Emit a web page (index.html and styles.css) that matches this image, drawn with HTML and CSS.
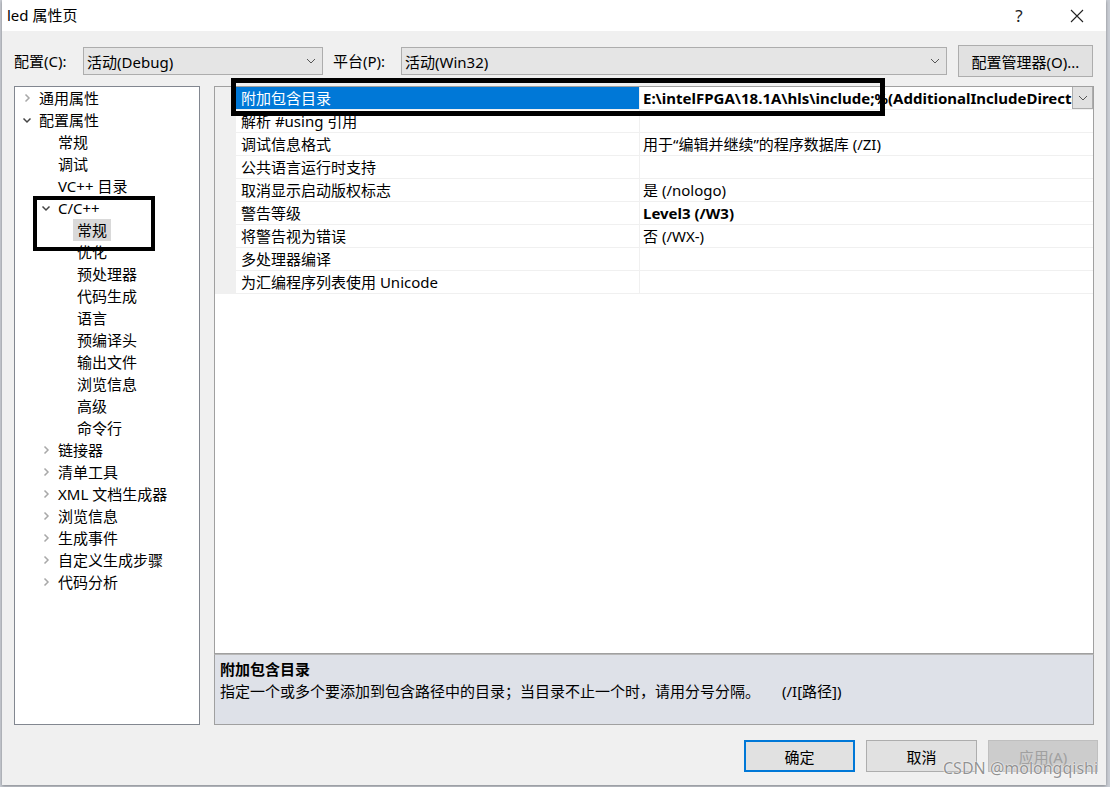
FILE: index.html
```html
<!DOCTYPE html>
<html lang="zh-CN">
<head>
<meta charset="utf-8">
<title>led 属性页</title>
<link rel="stylesheet" href="styles.css">
</head>
<body>
<div class="dialog">
  <div class="titlebar">
    <span class="title">led 属性页</span>
    <div class="title-btns">
      <span class="help">?</span>
      <span class="close"><svg width="14" height="14" viewBox="0 0 14 14"><path d="M1 1 L13 13 M13 1 L1 13" stroke="#222" stroke-width="1.1" fill="none"/></svg></span>
    </div>
  </div>

  <div class="toolbar">
    <span class="lbl lbl-config">配置(C):</span>
    <div class="combo combo-config"><span>活动(Debug)</span><svg class="chev" width="10" height="6" viewBox="0 0 10 6"><path d="M1 1 L5 5 L9 1" stroke="#555" stroke-width="1" fill="none"/></svg></div>
    <span class="lbl lbl-platform">平台(P):</span>
    <div class="combo combo-platform"><span>活动(Win32)</span><svg class="chev" width="10" height="6" viewBox="0 0 10 6"><path d="M1 1 L5 5 L9 1" stroke="#555" stroke-width="1" fill="none"/></svg></div>
    <div class="btn btn-mgr">配置管理器(O)...</div>
  </div>

  <div class="main">
    <div class="tree">
      <div class="node l0"><span class="tw"><svg width="16" height="22" viewBox="0 0 16 22"><path d="M6.5 7.5 L10 11 L6.5 14.5" stroke="#a8a8a8" stroke-width="1.5" fill="none"/></svg></span><span class="nl">通用属性</span></div>
      <div class="node l0"><span class="tw"><svg width="16" height="22" viewBox="0 0 16 22"><path d="M4.5 9.5 L8 13 L11.5 9.5" stroke="#444" stroke-width="1.5" fill="none"/></svg></span><span class="nl">配置属性</span></div>
      <div class="node l1"><span class="tw"></span><span class="nl">常规</span></div>
      <div class="node l1"><span class="tw"></span><span class="nl">调试</span></div>
      <div class="node l1"><span class="tw"></span><span class="nl">VC++ 目录</span></div>
      <div class="node l1"><span class="tw"><svg width="16" height="22" viewBox="0 0 16 22"><path d="M4.5 9.5 L8 13 L11.5 9.5" stroke="#444" stroke-width="1.5" fill="none"/></svg></span><span class="nl">C/C++</span></div>
      <div class="node l2"><span class="tw"></span><span class="nl sel">常规</span></div>
      <div class="node l2"><span class="tw"></span><span class="nl">优化</span></div>
      <div class="node l2"><span class="tw"></span><span class="nl">预处理器</span></div>
      <div class="node l2"><span class="tw"></span><span class="nl">代码生成</span></div>
      <div class="node l2"><span class="tw"></span><span class="nl">语言</span></div>
      <div class="node l2"><span class="tw"></span><span class="nl">预编译头</span></div>
      <div class="node l2"><span class="tw"></span><span class="nl">输出文件</span></div>
      <div class="node l2"><span class="tw"></span><span class="nl">浏览信息</span></div>
      <div class="node l2"><span class="tw"></span><span class="nl">高级</span></div>
      <div class="node l2"><span class="tw"></span><span class="nl">命令行</span></div>
      <div class="node l1"><span class="tw"><svg width="16" height="22" viewBox="0 0 16 22"><path d="M6.5 7.5 L10 11 L6.5 14.5" stroke="#a8a8a8" stroke-width="1.5" fill="none"/></svg></span><span class="nl">链接器</span></div>
      <div class="node l1"><span class="tw"><svg width="16" height="22" viewBox="0 0 16 22"><path d="M6.5 7.5 L10 11 L6.5 14.5" stroke="#a8a8a8" stroke-width="1.5" fill="none"/></svg></span><span class="nl">清单工具</span></div>
      <div class="node l1"><span class="tw"><svg width="16" height="22" viewBox="0 0 16 22"><path d="M6.5 7.5 L10 11 L6.5 14.5" stroke="#a8a8a8" stroke-width="1.5" fill="none"/></svg></span><span class="nl">XML 文档生成器</span></div>
      <div class="node l1"><span class="tw"><svg width="16" height="22" viewBox="0 0 16 22"><path d="M6.5 7.5 L10 11 L6.5 14.5" stroke="#a8a8a8" stroke-width="1.5" fill="none"/></svg></span><span class="nl">浏览信息</span></div>
      <div class="node l1"><span class="tw"><svg width="16" height="22" viewBox="0 0 16 22"><path d="M6.5 7.5 L10 11 L6.5 14.5" stroke="#a8a8a8" stroke-width="1.5" fill="none"/></svg></span><span class="nl">生成事件</span></div>
      <div class="node l1"><span class="tw"><svg width="16" height="22" viewBox="0 0 16 22"><path d="M6.5 7.5 L10 11 L6.5 14.5" stroke="#a8a8a8" stroke-width="1.5" fill="none"/></svg></span><span class="nl">自定义生成步骤</span></div>
      <div class="node l1"><span class="tw"><svg width="16" height="22" viewBox="0 0 16 22"><path d="M6.5 7.5 L10 11 L6.5 14.5" stroke="#a8a8a8" stroke-width="1.5" fill="none"/></svg></span><span class="nl">代码分析</span></div>
    </div>

    <div class="right">
      <div class="grid">
        <div class="row selected">
          <div class="margin"></div>
          <div class="name">附加包含目录</div>
          <div class="value"><span class="vtext bold">E:\intelFPGA\18.1A\hls\include;%(AdditionalIncludeDirectories)</span><span class="dd"><svg width="10" height="6" viewBox="0 0 10 6"><path d="M1 1 L5 5 L9 1" stroke="#555" stroke-width="1" fill="none"/></svg></span></div>
        </div>
        <div class="row"><div class="margin"></div><div class="name">解析 #using 引用</div><div class="value"></div></div>
        <div class="row"><div class="margin"></div><div class="name">调试信息格式</div><div class="value">用于“编辑并继续”的程序数据库 (/ZI)</div></div>
        <div class="row"><div class="margin"></div><div class="name">公共语言运行时支持</div><div class="value"></div></div>
        <div class="row"><div class="margin"></div><div class="name">取消显示启动版权标志</div><div class="value">是 (/nologo)</div></div>
        <div class="row"><div class="margin"></div><div class="name">警告等级</div><div class="value bold">Level3 (/W3)</div></div>
        <div class="row"><div class="margin"></div><div class="name">将警告视为错误</div><div class="value">否 (/WX-)</div></div>
        <div class="row"><div class="margin"></div><div class="name">多处理器编译</div><div class="value"></div></div>
        <div class="row"><div class="margin"></div><div class="name">为汇编程序列表使用 Unicode</div><div class="value"></div></div>
      </div>
      <div class="desc">
        <div class="desc-title">附加包含目录</div>
        <div class="desc-text">指定一个或多个要添加到包含路径中的目录；当目录不止一个时，请用分号分隔。<span class="switch">(/I[路径])</span></div>
      </div>
    </div>
  </div>

  <div class="footer">
    <div class="btn fbtn default">确定</div>
    <div class="btn fbtn">取消</div>
    <div class="btn fbtn disabled">应用(A)</div>
  </div>

  <div class="annot annot-row"></div>
  <div class="annot annot-tree"></div>
  <div class="watermark">CSDN @molongqishi</div>
</div>
</body>
</html>
```

FILE: styles.css
```css
html, body {
  margin: 0;
  padding: 0;
}
body {
  width: 1110px;
  height: 787px;
  overflow: hidden;
  background: #c9cdd4;
  font-family: "Noto Sans", "Noto Sans CJK SC", sans-serif;
  font-size: 15px;
  color: #000;
}
.dialog {
  position: relative;
  margin-left: 2px;
  width: 1104px;
  height: 785px;
  background: #f0f0f0;
  box-shadow: 0 1px 3px rgba(0,0,0,0.35);
  display: flex;
  flex-direction: column;
}
.titlebar {
  height: 31px;
  background: #fff;
  display: flex;
  align-items: center;
  justify-content: space-between;
  padding-left: 5px;
  flex: none;
}
.title { line-height: 31px; }
.title-btns {
  display: flex;
  align-items: center;
  height: 31px;
}
.help {
  width: 20px;
  text-align: center;
  margin-right: 41px;
  font-size: 17px;
  color: #222;
  line-height: 31px;
}
.close {
  display: flex;
  margin-right: 22px;
}

.toolbar {
  display: flex;
  align-items: center;
  height: 32px;
  margin-top: 14px;
  padding: 0 12px;
  flex: none;
}
.lbl { line-height: 28px; white-space: nowrap; flex: none; }
.lbl-config { width: 69px; }
.lbl-platform { width: 68px; margin-left: 10px; }
.combo {
  box-sizing: border-box;
  height: 28px;
  background: #e5e5e5;
  border: 1px solid #adadad;
  display: flex;
  align-items: center;
  justify-content: space-between;
  padding: 0 6px 0 3px;
  flex: none;
}
.combo-config { width: 240px; }
.combo-platform { width: 546px; }
.btn {
  box-sizing: border-box;
  background: #e1e1e1;
  border: 1px solid #adadad;
  display: flex;
  align-items: center;
  justify-content: center;
  flex: none;
}
.btn-mgr {
  width: 135px;
  height: 32px;
  margin-left: 11px;
}

.main {
  display: flex;
  margin-top: 9px;
  height: 639px;
  padding: 0 12px;
  flex: none;
}
.tree {
  box-sizing: border-box;
  flex: none;
  width: 186px;
  height: 639px;
  background: #fff;
  border: 1px solid #828790;
}
.node {
  display: flex;
  align-items: center;
  height: 22px;
  line-height: 22px;
  white-space: nowrap;
}
.node.l0 { padding-left: 4px; }
.node.l1 { padding-left: 23px; }
.node.l2 { padding-left: 42px; }
.tw {
  width: 16px;
  height: 22px;
  display: flex;
  flex: none;
}
.nl { padding: 0 4px; }
.nl.sel { background: #d9d9d9; }

.right {
  flex: 1;
  min-width: 0;
  margin-left: 14px;
  display: flex;
  flex-direction: column;
}
.grid {
  flex: 1;
  box-sizing: border-box;
  background: #fff;
  border: 1px solid #a0a0a0;
}
.row {
  display: flex;
  height: 22px;
  border-bottom: 1px solid #f0f0f0;
  line-height: 22px;
  white-space: nowrap;
}
.margin {
  width: 21px;
  flex: none;
  background: #f0f0f0;
}
.name {
  box-sizing: border-box;
  width: 404px;
  flex: none;
  padding-left: 5px;
  border-right: 1px solid #f0f0f0;
  overflow: hidden;
}
.value {
  flex: 1;
  min-width: 0;
  padding-left: 3px;
  display: flex;
  overflow: hidden;
}
.bold { font-weight: 700; }
.row.selected .name {
  background: #0078d7;
  color: #fff;
}
.vtext {
  flex: 1;
  min-width: 0;
  overflow: hidden;
}
.dd {
  box-sizing: border-box;
  flex: none;
  width: 21px;
  height: 23px;
  margin-top: -1px;
  background: #e1e1e1;
  border: 1px solid #adadad;
  display: flex;
  align-items: center;
  justify-content: center;
}

.desc {
  box-sizing: border-box;
  flex: none;
  height: 71px;
  background: #dee1e8;
  border: 1px solid #a0a0a0;
  border-top: 1px solid #b8b8b8;
  padding: 3px 5px 0;
  line-height: 22px;
}
.desc-title { font-weight: 700; }
.desc-text { white-space: nowrap; }
.switch { margin-left: 22px; }

.footer {
  display: flex;
  justify-content: flex-end;
  margin-top: 15px;
  padding-right: 8px;
  gap: 11px;
  flex: none;
}
.fbtn {
  width: 111px;
  height: 32px;
}
.fbtn.default {
  border: 2px solid #0078d7;
}
.fbtn.disabled {
  background: #cccccc;
  border-color: #bfbfbf;
  color: #a0a0a0;
  width: 110px;
}

.annot {
  position: absolute;
  border: 4px solid #000;
  box-sizing: border-box;
  pointer-events: none;
}
.annot-row {
  left: 229px;
  top: 78px;
  width: 654px;
  height: 38px;
  border-width: 5px;
}
.annot-tree {
  left: 31px;
  top: 196px;
  width: 122px;
  height: 55px;
}
.watermark {
  position: absolute;
  left: 941px;
  top: 757px;
  font-size: 16px;
  line-height: 22px;
  color: rgba(110,110,110,0.75);
  text-shadow: 0 0 2px #fff, 0 0 1px #fff;
  white-space: nowrap;
}
```
